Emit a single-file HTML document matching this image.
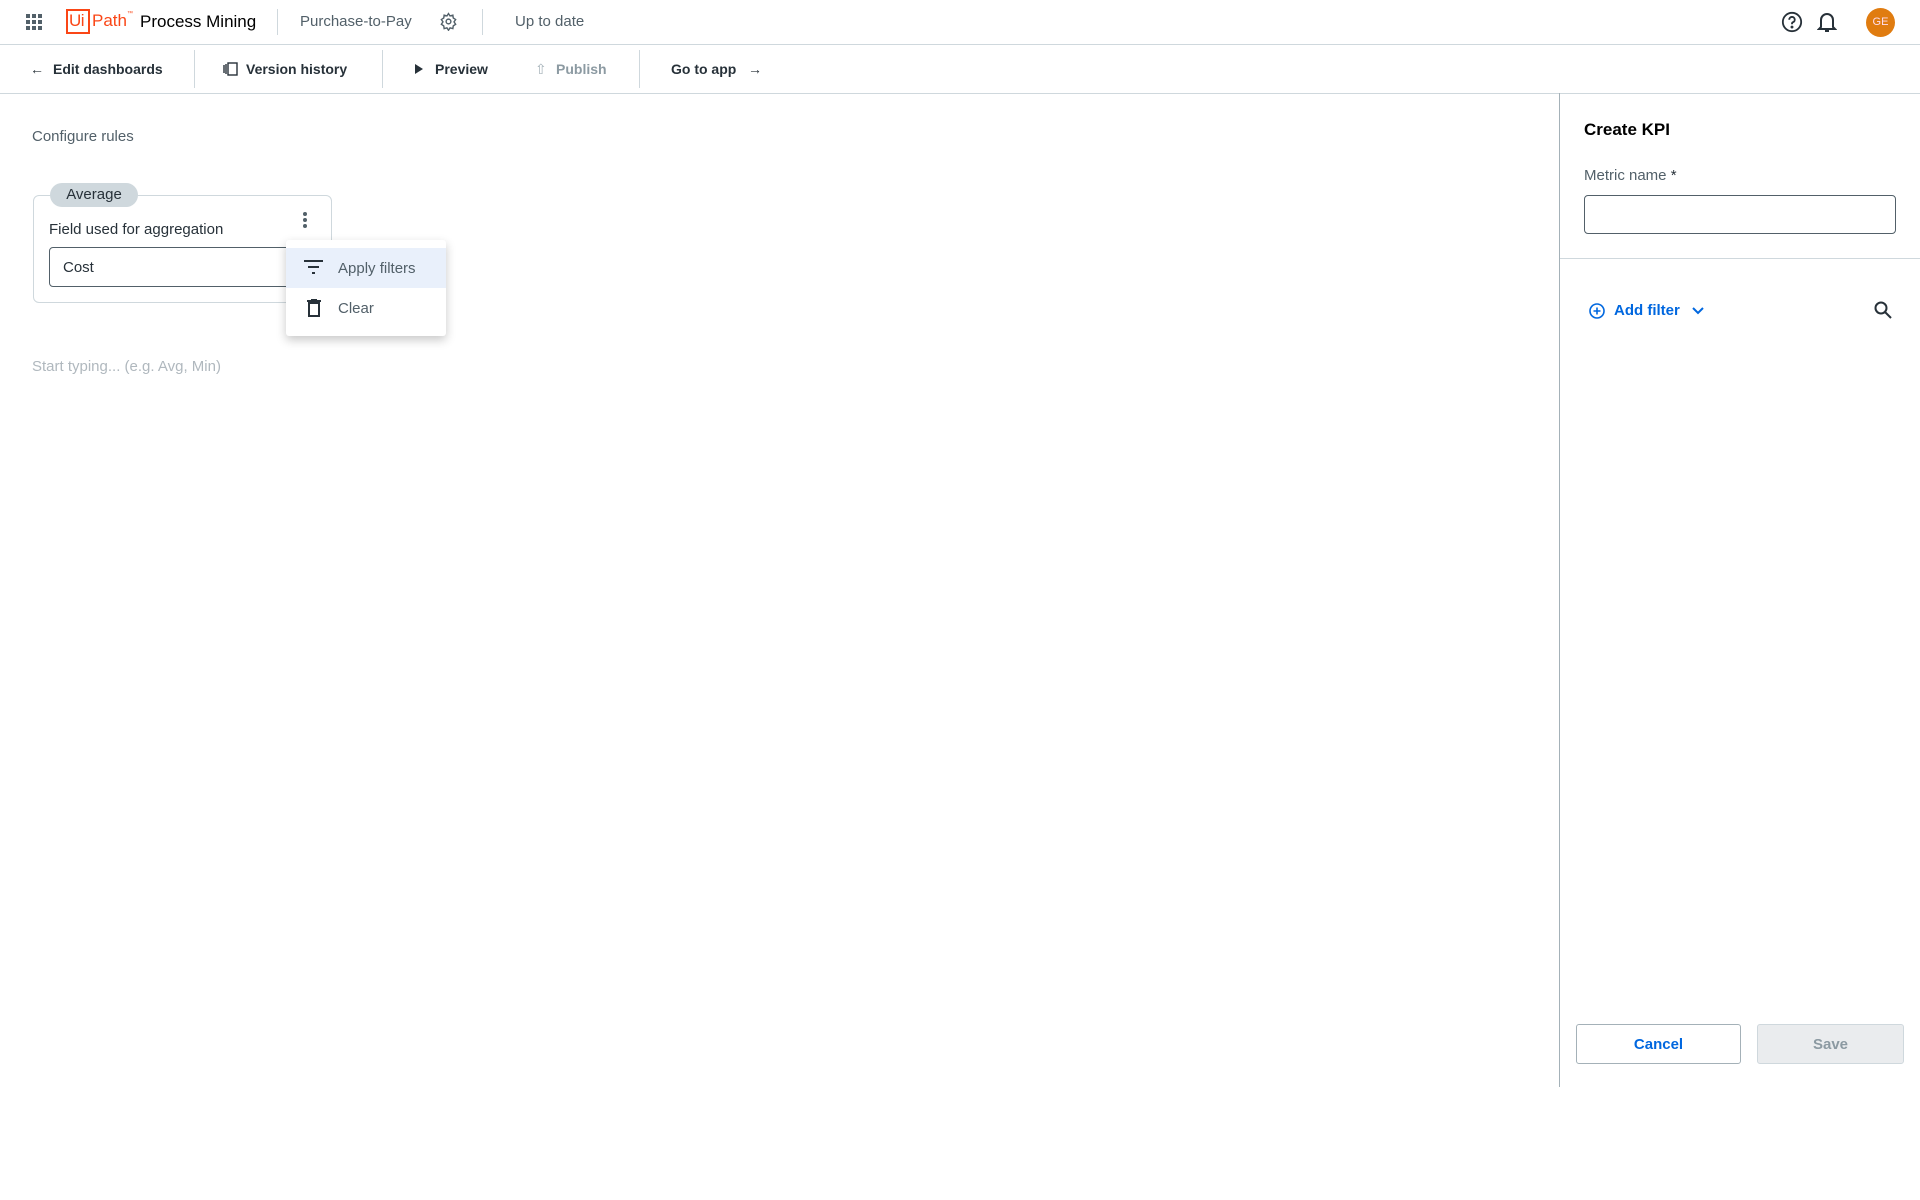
<!DOCTYPE html>
<html><head><meta charset="utf-8"><style>
*{box-sizing:border-box;margin:0;padding:0}
body{width:1920px;height:1200px;background:#fff;font-family:"Liberation Sans",sans-serif;color:#273139;position:relative;overflow:hidden}
.a{position:absolute;white-space:nowrap}
.hl{position:absolute;background:#cfd8dd}
.nav{font-size:14px;font-weight:bold;color:#273139;top:61px}
</style></head><body>
<!-- header -->
<svg class="a" style="left:26px;top:14px" width="16" height="16" viewBox="0 0 16 16" fill="#526069"><rect x="0" y="0" width="4" height="4"/><rect x="6" y="0" width="4" height="4"/><rect x="12" y="0" width="4" height="4"/><rect x="0" y="6" width="4" height="4"/><rect x="6" y="6" width="4" height="4"/><rect x="12" y="6" width="4" height="4"/><rect x="0" y="12" width="4" height="4"/><rect x="6" y="12" width="4" height="4"/><rect x="12" y="12" width="4" height="4"/></svg>
<div class="a" style="left:66px;top:9px;width:24px;height:25px;border:2px solid #fa4616"></div>
<div class="a" style="left:69px;top:11px;font-size:17px;color:#fa4616;letter-spacing:-0.5px">Ui</div>
<div class="a" style="left:92px;top:11px;font-size:17px;color:#fa4616">Path<span style="font-size:6px;vertical-align:top">™</span></div>
<div class="a" style="left:140px;top:12px;font-size:17px;color:#000">Process Mining</div>
<div class="hl" style="left:277px;top:9px;width:1px;height:26px"></div>
<div class="a" style="left:300px;top:13px;font-size:15px;color:#526069">Purchase-to-Pay</div>
<svg class="a" style="left:439px;top:12px" width="19" height="19" viewBox="0 0 24 24" fill="none" stroke="#526069" stroke-width="1.8"><circle cx="12" cy="12" r="3"/><path d="M12 2l2 3 3.5-1 .5 3.5 3 2-2 3 2 3-3 2-.5 3.5-3.5-1-2 3-2-3-3.5 1-.5-3.5-3-2 2-3-2-3 3-2 .5-3.5 3.5 1z"/></svg>
<div class="hl" style="left:482px;top:9px;width:1px;height:26px"></div>
<div class="a" style="left:515px;top:13px;font-size:15px;color:#526069">Up to date</div>
<svg class="a" style="left:1781px;top:11px" width="22" height="22" viewBox="0 0 24 24" fill="none" stroke="#273139" stroke-width="2"><circle cx="12" cy="12" r="10"/><path d="M9 9.5a3 3 0 1 1 4 2.8c-.7.3-1 .9-1 1.7v.5"/><circle cx="12" cy="17.5" r=".6" fill="#273139"/></svg>
<svg class="a" style="left:1817px;top:11px" width="20" height="22" viewBox="0 0 20 22" fill="none" stroke="#273139" stroke-width="2"><path d="M4 16V9a6 6 0 0 1 12 0v7l2 2H2z"/><path d="M8 20h4"/></svg>
<div class="a" style="left:1866px;top:8px;width:29px;height:29px;border-radius:50%;background:#e07c10;color:#fde;font-size:11px;text-align:center;line-height:29px">GE</div>
<div class="hl" style="left:0;top:44px;width:1920px;height:1px"></div>
<!-- toolbar -->
<div class="a nav" style="left:30px;font-weight:normal">&#8592;</div>
<div class="a nav" style="left:53px">Edit dashboards</div>
<div class="hl" style="left:194px;top:50px;width:1px;height:38px"></div>
<svg class="a" style="left:223px;top:62px" width="15" height="14" viewBox="0 0 15 14" fill="none" stroke="#273139" stroke-width="1.4"><rect x="5" y="1" width="9" height="12"/><path d="M3 2v10M1 3v8"/></svg>
<div class="a nav" style="left:246px">Version history</div>
<div class="hl" style="left:382px;top:50px;width:1px;height:38px"></div>
<svg class="a" style="left:415px;top:64px" width="8" height="10" viewBox="0 0 8 10"><path d="M0 0L8 5L0 10z" fill="#273139"/></svg>
<div class="a nav" style="left:435px">Preview</div>
<div class="a nav" style="left:535px;color:#a4b1b8;font-weight:normal">&#8679;</div>
<div class="a nav" style="left:556px;color:#8c9aa2">Publish</div>
<div class="hl" style="left:639px;top:50px;width:1px;height:38px"></div>
<div class="a nav" style="left:671px">Go to app</div>
<div class="a nav" style="left:748px;font-weight:normal">&#8594;</div>
<div class="hl" style="left:0;top:93px;width:1920px;height:1px"></div>
<!-- main -->
<div class="a" style="left:32px;top:128px;font-size:15px;color:#526069">Configure rules</div>
<div class="a" style="left:33px;top:195px;width:299px;height:108px;border:1px solid #cfd8dd;border-radius:6px"></div>
<div class="a" style="left:50px;top:183px;width:88px;height:24px;border-radius:12px;background:#cfd8dd;font-size:15px;text-align:center;line-height:24px;color:#273139">Average</div>
<div class="a" style="left:49px;top:221px;font-size:15px;color:#273139">Field used for aggregation</div>
<svg class="a" style="left:302px;top:211px" width="6" height="18" viewBox="0 0 6 18" fill="#526069"><circle cx="3" cy="3" r="2"/><circle cx="3" cy="9" r="2"/><circle cx="3" cy="15" r="2"/></svg>
<div class="a" style="left:49px;top:247px;width:270px;height:40px;border:1px solid #526069;border-radius:4px;font-size:15px;line-height:40px;padding-left:13px;color:#273139">Cost</div>
<div class="a" style="left:286px;top:240px;width:160px;height:96px;background:#fff;border-radius:3px;box-shadow:0 4px 10px rgba(0,0,0,.22)">
 <div style="position:absolute;left:0;top:8px;width:160px;height:40px;background:#e9f0fb"></div>
 <svg style="position:absolute;left:18px;top:20px" width="19" height="14" viewBox="0 0 19 14" fill="#273139"><rect x="0" y="0" width="19" height="2"/><rect x="4" y="6" width="11" height="2"/><rect x="8" y="12" width="3" height="2"/></svg>
 <div style="position:absolute;left:52px;top:20px;font-size:15px;color:#526069">Apply filters</div>
 <svg style="position:absolute;left:21px;top:59px" width="14" height="18" viewBox="0 0 14 18" fill="none" stroke="#273139" stroke-width="2"><path d="M0 2h14M4 1h6"/><rect x="2" y="4" width="10" height="13"/></svg>
 <div style="position:absolute;left:52px;top:60px;font-size:15px;color:#526069">Clear</div>
</div>
<div class="a" style="left:32px;top:358px;font-size:15px;color:#b0b8be">Start typing... (e.g. Avg, Min)</div>
<!-- right panel -->
<div class="hl" style="left:1559px;top:93px;width:1px;height:994px;background:#a4b1b8"></div>
<div class="a" style="left:1584px;top:120px;font-size:17px;font-weight:bold;color:#000">Create KPI</div>
<div class="a" style="left:1584px;top:167px;font-size:15px;color:#526069">Metric name <span style="color:#273139">*</span></div>
<div class="a" style="left:1584px;top:195px;width:312px;height:39px;border:1px solid #526069;border-radius:4px"></div>
<div class="hl" style="left:1560px;top:258px;width:360px;height:1px"></div>
<svg class="a" style="left:1589px;top:303px" width="16" height="16" viewBox="0 0 16 16" fill="none" stroke="#0067df" stroke-width="1.6"><circle cx="8" cy="8" r="7"/><path d="M8 4.5v7M4.5 8h7"/></svg>
<div class="a" style="left:1614px;top:302px;font-size:15px;font-weight:bold;color:#0067df">Add filter</div>
<svg class="a" style="left:1692px;top:307px" width="12" height="8" viewBox="0 0 12 8" fill="none" stroke="#0067df" stroke-width="2"><path d="M1 1l5 5 5-5"/></svg>
<svg class="a" style="left:1874px;top:301px" width="18" height="18" viewBox="0 0 18 18" fill="none" stroke="#273139" stroke-width="2"><circle cx="7" cy="7" r="5.5"/><path d="M11 11l6 6"/></svg>
<div class="a" style="left:1576px;top:1024px;width:165px;height:40px;border:1px solid #a4b1b8;border-radius:3px;font-size:15px;font-weight:bold;color:#0067df;text-align:center;line-height:40px">Cancel</div>
<div class="a" style="left:1757px;top:1024px;width:147px;height:40px;border:1px solid #cfd8dd;background:#eaecee;border-radius:3px;font-size:15px;font-weight:bold;color:#8c9aa2;text-align:center;line-height:40px">Save</div>
</body></html>
